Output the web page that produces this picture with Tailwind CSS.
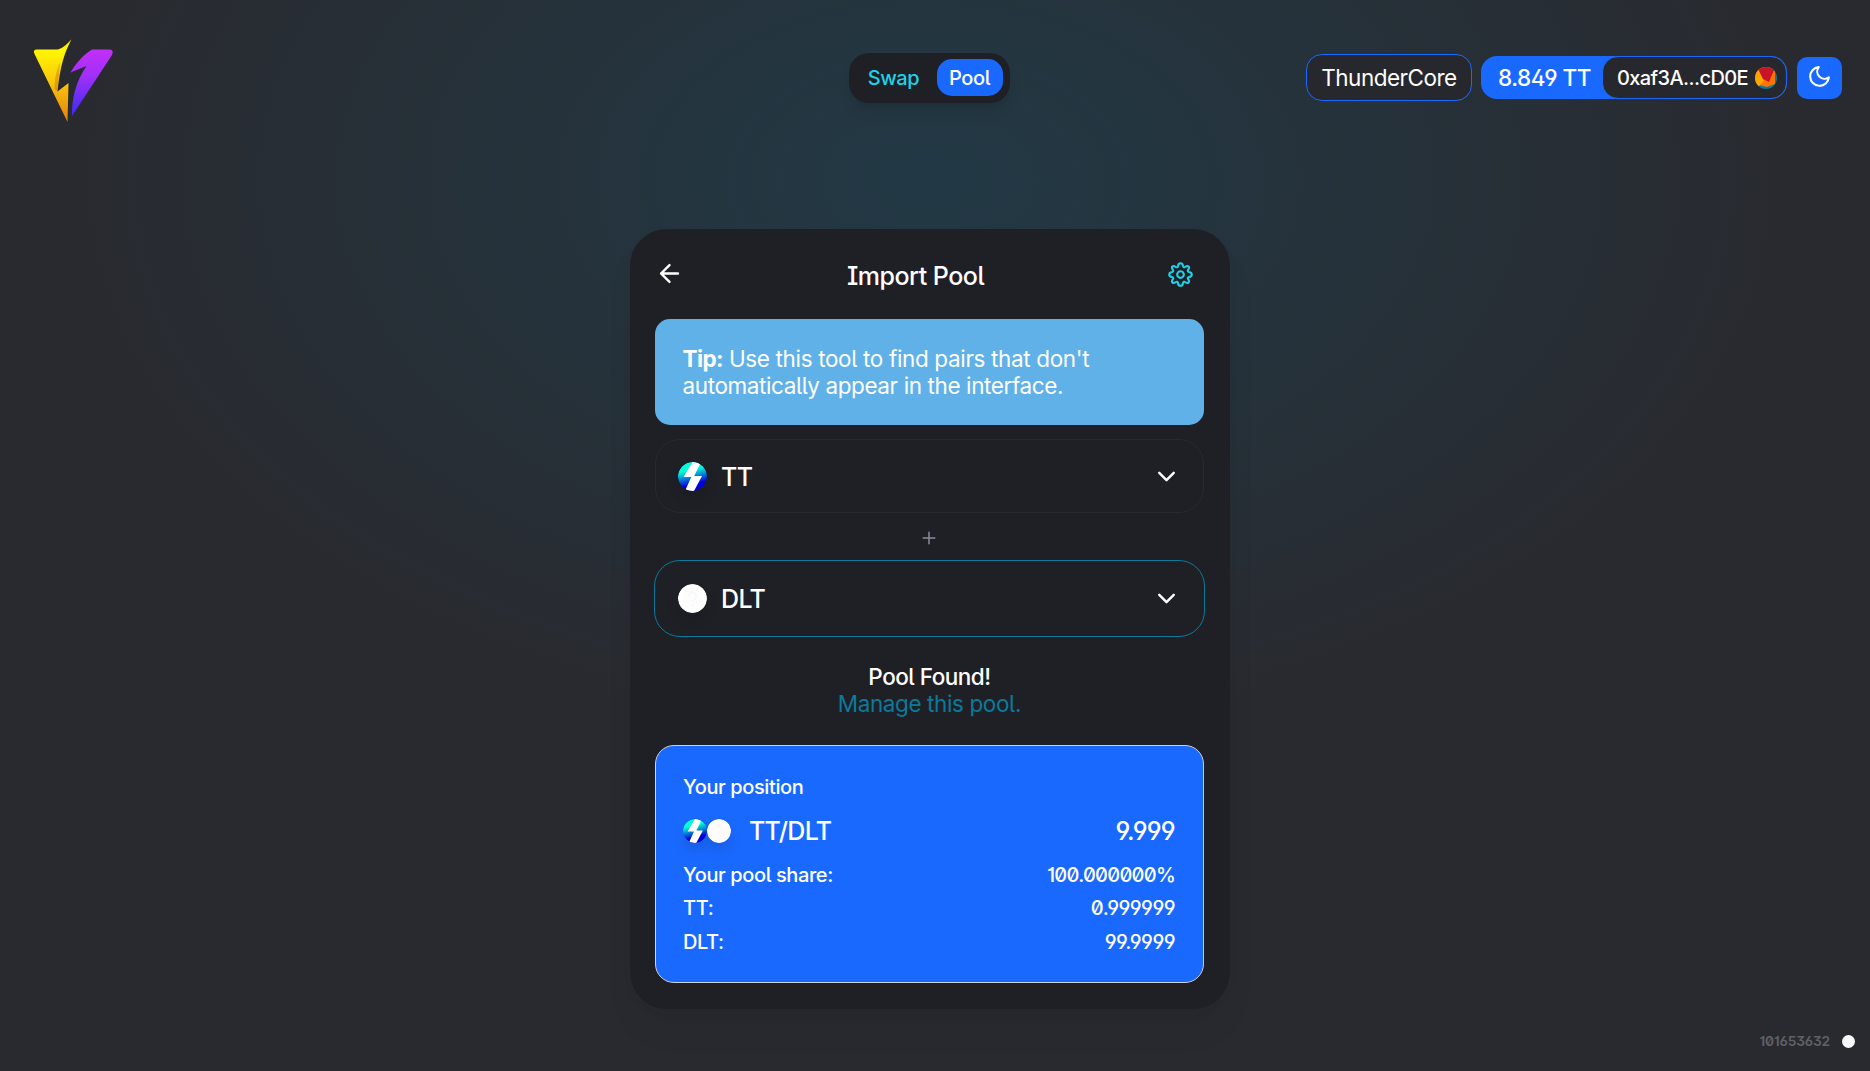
<!DOCTYPE html>
<html lang="en">
<head>
<meta charset="utf-8">
<title>Import Pool</title>
<script src="https://cdn.jsdelivr.net/npm/@tailwindcss/browser@4"></script>
</head>
<body class="relative flex h-[1071px] w-[1870px] flex-col overflow-hidden bg-[#292a2f] bg-[radial-gradient(880px_560px_at_930px_180px,#223945_0%,#292a2f_100%)] pr-[10px] font-['Inter',sans-serif] tracking-[-0.4px] text-white [font-feature-settings:'ss01','ss02','cv01','cv03']">
<svg class="absolute size-0"><defs>
  <linearGradient id="tt" x1="0" y1="0" x2=".25" y2="1"><stop offset=".35" stop-color="#00ffd8"/><stop offset=".85" stop-color="#0000d8"/></linearGradient>
  <linearGradient id="ly" x1="0" y1="0" x2="0" y2="1"><stop offset=".15" stop-color="#fff500"/><stop offset=".5" stop-color="#fcc80c"/><stop offset="1" stop-color="#e07f10"/></linearGradient>
  <linearGradient id="lp" x1="0" y1="0" x2="0" y2="1"><stop offset="0" stop-color="#c22ff8"/><stop offset=".4" stop-color="#a030fa"/><stop offset="1" stop-color="#3d2bf0"/></linearGradient>
  <clipPath id="c"><circle cx="14.5" cy="14.5" r="14.5"/></clipPath>
  <symbol id="thunder" viewBox="0 0 29 29"><g clip-path="url(#c)"><path fill="url(#tt)" d="M0 0h29v29H0z"/><path fill="#fff" d="M14.500 0h8.500l-6.800 14h7.800L15.500 30H6.500l6.800-15H5.500z"/></g></symbol>
  <symbol id="unknown" viewBox="0 0 29 29"><circle cx="14.500" cy="14.500" r="14.500" fill="#fff"/><circle cx="14.500" cy="14.500" r="11" fill="#fdfdfd"/><path d="M11 12a3.600 3.600 0 1 1 5.500 3c-1.400.9-2 1.300-2 2.800M14.500 20.500v1.500" fill="none" stroke="#f8f8f8" stroke-width="2"/></symbol>
</defs></svg>

<header class="grid h-[156px] grid-cols-3 items-start">
  <svg class="mt-[38px] ml-[32px] h-[86px] w-[84px]" viewBox="32 38 84 86">
    <path fill="url(#ly)" d="M37 49.500H58C63 48 67 44 71.500 39.500C65 51 60 66 57.500 91.500L68.500 83L67.500 122L35 55Q32 49.500 37 49.500Z"/>
    <path fill="#a95e08" fill-opacity=".35" d="M60 62C56 71 54.500 81 54.500 89L58 92L57.500 91.500Z"/>
    <path fill="url(#lp)" d="M92 49.500H109Q114.500 49.500 112 55L72 116C71.500 99 76 81 86.500 66L70.500 72.500C76 63 84 54 92 49.500Z"/>
  </svg>
  <nav class="mt-[53px] mr-[2px] flex h-[50px] w-[161px] items-center justify-self-center rounded-[20px] bg-[#1f2026] pr-[7px] text-[20px] font-medium shadow-lg">
    <a class="flex w-[88px] justify-center pl-[2px] text-[#1cd2e8]">Swap</a>
    <a class="-mt-px flex h-[37px] w-[66px] items-center justify-center rounded-[15px] bg-[#1a69ff] pt-px">Pool</a>
  </nav>
  <div class="mt-[54px] mr-[18px] flex items-center justify-end whitespace-nowrap">
    <div class="flex h-[47px] w-[166px] items-center justify-center rounded-[16px] border border-[#1a69ff] bg-[#27282d] pt-px text-[22.5px] tracking-[-0.5px]">ThunderCore</div>
    <div class="ml-[9px] flex h-[43px] w-[306px] items-center rounded-[16px] bg-[#1a69ff]">
      <span class="w-[122px] pt-px pl-[17px] text-[22.5px] font-medium tracking-[-0.45px]">8.849 TT</span>
      <button class="-ml-px flex h-[43px] w-[185px] items-center rounded-[16px] border border-[#1a69ff] bg-[#27282d] pl-[14px] text-[20px] font-medium tracking-[-0.6px] [font-feature-settings:normal]"><span class="w-[138px] pt-px text-left">0xaf3A...cD0E</span>
        <svg class="size-[22px]" viewBox="0 0 22 22"><clipPath id="a"><circle cx="11" cy="11" r="11"/></clipPath><g clip-path="url(#a)"><path fill="#087a9b" d="M0 0h22v22H0z"/><path fill="#ff7300" d="M0 0h20v17l-8 3-8-2z"/><path fill="#fca600" d="M0 3l4-2 5 13-6 6-3-3z"/><path fill="#c81426" d="M2 0h16l1 3-5 12-6-3z"/></g></svg>
      </button>
    </div>
    <button class="mt-[1px] ml-[10px] flex h-[42px] w-[45px] items-center justify-center rounded-[10px] bg-[#1a69ff]"><svg class="-mt-[3px] size-[25px]" viewBox="0 0 24 24" fill="none" stroke="#fff" stroke-width="2" stroke-linecap="round" stroke-linejoin="round"><path d="M21 12.790A9 9 0 1 1 11.210 3 7 7 0 0 0 21 12.790z"/></svg></button>
  </div>
</header>

<main class="mt-[73px] flex h-[780px] w-[600px] flex-col self-center rounded-[37px] bg-[#1f2026] px-[25px] shadow-[0_24px_32px_rgba(0,0,0,0.04),0_4px_8px_rgba(0,0,0,0.04)]">
  <div class="flex h-[90px] items-center pr-[12px]">
    <svg class="-mt-[2px] size-[29px]" viewBox="0 0 24 24" fill="none" stroke="#fff" stroke-width="2" stroke-linecap="round" stroke-linejoin="round"><path d="M19 12H5M12 19l-7-7 7-7"/></svg>
    <h1 class="ml-[163px] pt-[6px] text-[25px] font-medium tracking-[-0.5px]">Import Pool</h1>
    <svg class="mt-[1px] ml-auto size-[25px]" viewBox="0 0 24 24" fill="none" stroke="#1cd2e8" stroke-width="2" stroke-linejoin="round"><circle cx="12" cy="12" r="3.200"/><path d="M12 1.200C13.700 1.200 14.300 2.300 14.400 4C14.600 5.100 15.600 5.400 16.500 4.800C17.900 3.700 19 3.600 19.800 4.400C20.600 5.200 20.300 6.200 19.300 7.500C18.600 8.500 19 9.400 20.100 9.600C21.800 9.800 22.800 10.500 22.800 12C22.800 13.500 21.800 14.200 20.100 14.400C19 14.600 18.600 15.500 19.300 16.500C20.300 17.800 20.600 18.800 19.800 19.600C19 20.400 17.900 20.300 16.500 19.200C15.600 18.600 14.600 18.900 14.400 20C14.300 21.700 13.700 22.800 12 22.800C10.300 22.800 9.700 21.700 9.600 20C9.400 18.900 8.400 18.600 7.500 19.200C6.100 20.300 5 20.400 4.200 19.600C3.400 18.800 3.700 17.800 4.700 16.500C5.400 15.500 5 14.600 3.900 14.400C2.200 14.200 1.200 13.500 1.200 12C1.200 10.500 2.200 9.800 3.900 9.600C5 9.400 5.400 8.500 4.700 7.500C3.700 6.200 3.400 5.200 4.200 4.400C5 3.600 6.100 3.700 7.500 4.800C8.400 5.400 9.400 5.100 9.600 4C9.700 2.300 10.300 1.200 12 1.200Z"/></svg>
  </div>
  <div class="flex h-[106px] w-[549px] items-center rounded-[15px] bg-[#5fb1e8] pt-px pl-[27.5px] text-[22.5px] leading-[26.300px] tracking-[-0.35px]"><p><b class="font-bold tracking-[-0.6px]">Tip:</b> Use this tool to find pairs that don't<br><span class="tracking-[-0.39px]">automatically appear in the interface.</span></p></div>
  <button class="mt-[14px] flex h-[74px] w-[549px] items-center rounded-[25px] border border-[#292a2f] pl-[22px] text-[25px] font-medium">
    <svg class="size-[29px] rounded-full shadow-[0_8px_12px_rgba(0,0,0,0.1)]"><use href="#thunder"/></svg><span class="mt-[3px] ml-[14px] tracking-[-0.6px]">TT</span>
    <svg class="mr-[22px] ml-auto size-[29px]" viewBox="0 0 24 24" fill="none" stroke="#fff" stroke-width="2" stroke-linecap="round" stroke-linejoin="round"><path d="M6 9l6 6 6-6"/></svg>
  </button>
  <div class="flex h-[47px] w-[549px] items-center justify-center"><svg class="mt-[2px] mr-px size-[20px]" viewBox="0 0 24 24" fill="none" stroke="#888d9b" stroke-width="1.800" stroke-linecap="round"><path d="M12 5v14M5 12h14"/></svg></div>
  <button class="-ml-px flex h-[77px] w-[551px] items-center rounded-[26px] border border-[#0a7a9c] pl-[23px] text-[25px] font-medium">
    <svg class="size-[29px] rounded-full shadow-[0_8px_12px_rgba(0,0,0,0.1)]"><use href="#unknown"/></svg><span class="mt-[2px] ml-[14px] tracking-[-0.6px]">DLT</span>
    <svg class="mr-[23px] ml-auto size-[29px]" viewBox="0 0 24 24" fill="none" stroke="#fff" stroke-width="2" stroke-linecap="round" stroke-linejoin="round"><path d="M6 9l6 6 6-6"/></svg>
  </button>
  <div class="flex h-[108px] w-[549px] flex-col items-center justify-center pb-[1px] text-[22.5px] leading-[26.300px]"><p class="font-medium tracking-[-0.5px]">Pool Found!</p><a class="text-[#0a7a9c]">Manage this pool.</a></div>
  <section class="flex h-[238px] w-[549px] flex-col rounded-[19px] border border-[#ced0d9] bg-[#1a69ff] pt-[29px] pr-[28px] pl-[27px] text-[20px] leading-[24px] font-medium">
    <h2>Your position</h2>
    <div class="mt-[17px] flex h-[30px] items-center text-[25px]">
      <svg class="size-[24px] rounded-full shadow-[0_8px_12px_rgba(0,0,0,0.1)]"><use href="#thunder"/></svg><svg class="size-[24px] rounded-full shadow-[0_8px_12px_rgba(0,0,0,0.1)]"><use href="#unknown"/></svg>
      <span class="ml-[18px] tracking-[-0.75px]">TT/DLT</span><span class="ml-auto tracking-[-0.7px]">9.999</span>
    </div>
    <div class="mt-[17px] flex justify-between"><span>Your pool share:</span><span class="tracking-[-0.75px]">100.000000%</span></div>
    <div class="mt-[9px] flex justify-between"><span>TT:</span><span class="tracking-[-0.55px]">0.999999</span></div>
    <div class="mt-[10px] flex justify-between"><span>DLT:</span><span class="tracking-[-0.55px]">99.9999</span></div>
  </section>
</main>
<footer class="absolute right-[15px] bottom-[21px] flex items-center text-[13.750px] leading-[18px] font-semibold tracking-[-0.15px] text-[#606166]"><span>101653632</span><i class="mt-[1px] ml-[12px] size-[13px] rounded-full bg-[#fafafa]"></i></footer>
</body>
</html>
